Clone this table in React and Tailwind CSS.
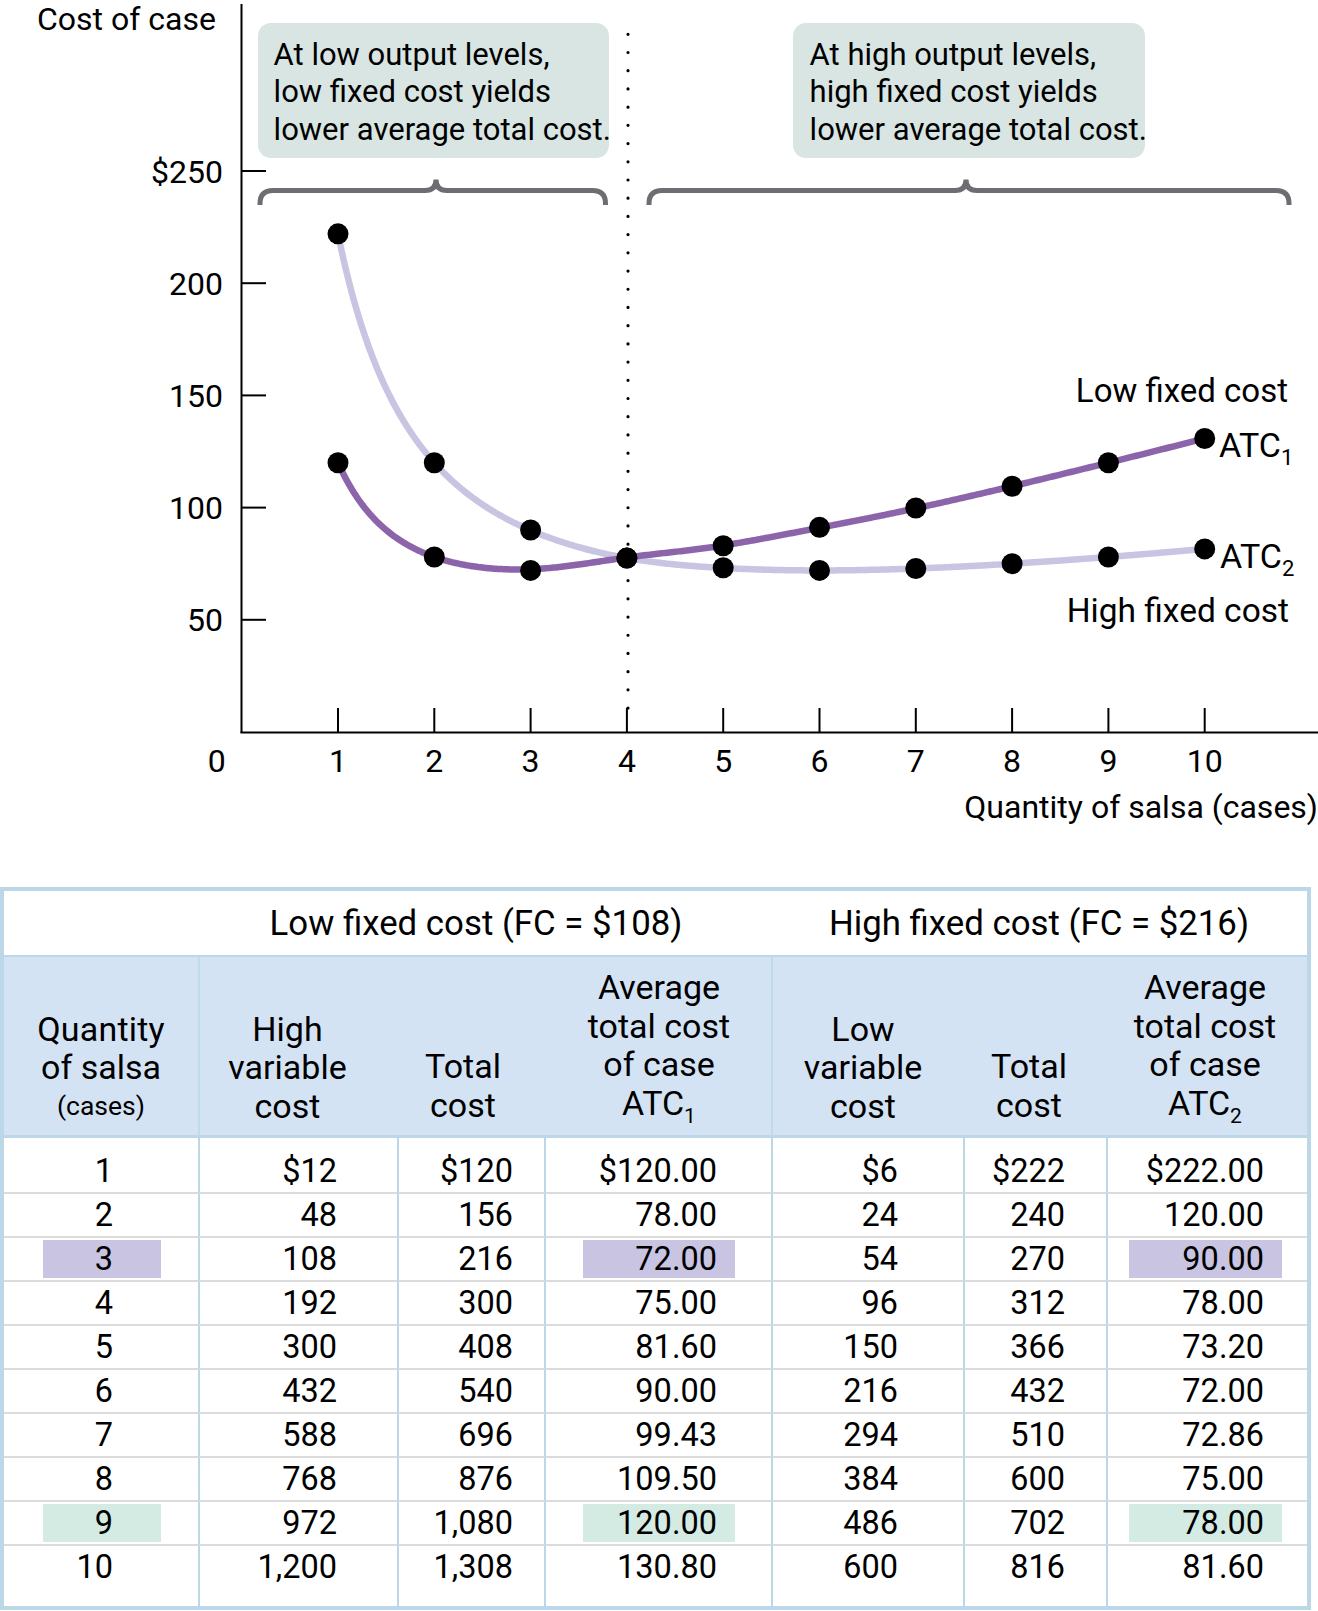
import React from "react";

const X = (q) => 241.7 + 96.3 * q;
const Y = (v) => 732 - 2.244 * v;
const g = (q) => Math.exp(-(((q - 4) / 0.8) ** 2));
const h = (q) => Math.exp(-(((q - 5.5) / 1.2) ** 2));
const atc1 = (q) => 108 / q + 12 * q + 2.5 * g(q) + 1.2 * h(q);
const atc2 = (q) => 216 / q + 6 * q - 0.5 * g(q);

function curvePath(f) {
  let d = "";
  for (let i = 0; i <= 450; i++) {
    const q = 1 + (9 * i) / 450;
    d += (i === 0 ? "M" : "L") + X(q).toFixed(2) + " " + Y(f(q)).toFixed(2) + " ";
  }
  return d;
}

const d1 = [120, 78, 72, 77.5, 83, 91.2, 99.8, 109.5, 120, 130.8];
const d2 = [222, 120, 90, 77.5, 73.2, 72, 72.86, 75, 78, 81.6];

function brace(x1, x2, xm) {
  const y = 190.5;
  const r = 13;
  const yb = 205;
  return `M ${x1} ${yb} L ${x1} ${y + r} Q ${x1} ${y} ${x1 + r} ${y} L ${xm - 11} ${y} Q ${xm} ${y} ${xm} ${y - 11} Q ${xm} ${y} ${xm + 11} ${y} L ${x2 - r} ${y} Q ${x2} ${y} ${x2} ${y + r} L ${x2} ${yb}`;
}

function Chart() {
  const yTicks = [250, 200, 150, 100, 50];
  const qs = [1, 2, 3, 4, 5, 6, 7, 8, 9, 10];
  return (
    <div className="relative h-[887px] w-[1318px]">
      <svg width="1318" height="887" className="block">
        {/* axes */}
        <line x1="241.5" y1="4" x2="241.5" y2="733" stroke="#000" strokeWidth="2" />
        <line x1="240.5" y1="732.5" x2="1318" y2="732.5" stroke="#000" strokeWidth="2" />
        {yTicks.map((v) => (
          <line key={v} x1="241" y1={Y(v)} x2="266" y2={Y(v)} stroke="#000" strokeWidth="2" />
        ))}
        {qs.map((q) => (
          <line key={q} x1={X(q)} y1="708" x2={X(q)} y2="732" stroke="#000" strokeWidth="2" />
        ))}
        {/* dotted line */}
        <line
          x1="628"
          y1="34.3"
          x2="628"
          y2="716"
          stroke="#000"
          strokeWidth="3.2"
          strokeLinecap="round"
          strokeDasharray="0.01 18.2"
        />
        {/* braces */}
        <path d={brace(260, 605.5, 436)} fill="none" stroke="#6d6e71" strokeWidth="5" />
        <path d={brace(649, 1289, 966)} fill="none" stroke="#6d6e71" strokeWidth="5" />
        {/* curves */}
        <path d={curvePath(atc2)} fill="none" stroke="#c8c5e2" strokeWidth="6.5" strokeLinecap="round" />
        <path d={curvePath(atc1)} fill="none" stroke="#8b64aa" strokeWidth="6.5" strokeLinecap="round" />
        {d1.map((v, i) => (
          <circle key={"a" + i} cx={X(i + 1)} cy={Y(v)} r="10.5" fill="#000" />
        ))}
        {d2.map((v, i) => (
          <circle key={"b" + i} cx={X(i + 1)} cy={Y(v)} r="10.5" fill="#000" />
        ))}
        {/* text */}
        <g fill="#000" fontSize="32">
          <text x="37" y="30">Cost of case</text>
          {yTicks.map((v) => (
            <text key={v} x="223" y={Y(v) + 11.5} textAnchor="end">
              {v === 250 ? "$250" : String(v)}
            </text>
          ))}
          <text x="216.7" y="771.7" textAnchor="middle">0</text>
          {qs.map((q) => (
            <text key={q} x={X(q)} y="771.7" textAnchor="middle">
              {q}
            </text>
          ))}
          <text x="1318" y="818" textAnchor="end">Quantity of salsa (cases)</text>
          <text x="1288" y="401.7" textAnchor="end" fontSize="33">Low fixed cost</text>
          <text x="1219" y="457" fontSize="34">
            ATC<tspan fontSize="22" dy="8">1</tspan>
          </text>
          <text x="1220" y="568" fontSize="34">
            ATC<tspan fontSize="22" dy="8">2</tspan>
          </text>
          <text x="1289" y="621.7" textAnchor="end" fontSize="33.5">High fixed cost</text>
        </g>
      </svg>
      <div className="absolute left-[258px] top-[23px] h-[135px] w-[351px] rounded-[13px] bg-[#d8e5e2] pl-[15.6px] pt-[12.5px] text-[31px] leading-[37.5px] text-black whitespace-nowrap">
        <div>At low output levels,</div>
        <div>low fixed cost yields</div>
        <div>lower average total cost.</div>
      </div>
      <div className="absolute left-[793px] top-[23px] h-[135px] w-[352px] rounded-[13px] bg-[#d8e5e2] pl-[16.6px] pt-[12.5px] text-[31px] leading-[37.5px] text-black whitespace-nowrap">
        <div>At high output levels,</div>
        <div>high fixed cost yields</div>
        <div>lower average total cost.</div>
      </div>
    </div>
  );
}

const rows = [
  ["1", "$12", "$120", "$120.00", "$6", "$222", "$222.00"],
  ["2", "48", "156", "78.00", "24", "240", "120.00"],
  ["3", "108", "216", "72.00", "54", "270", "90.00"],
  ["4", "192", "300", "75.00", "96", "312", "78.00"],
  ["5", "300", "408", "81.60", "150", "366", "73.20"],
  ["6", "432", "540", "90.00", "216", "432", "72.00"],
  ["7", "588", "696", "99.43", "294", "510", "72.86"],
  ["8", "768", "876", "109.50", "384", "600", "75.00"],
  ["9", "972", "1,080", "120.00", "486", "702", "78.00"],
  ["10", "1,200", "1,308", "130.80", "600", "816", "81.60"],
];

function Table() {
  const grid = "grid grid-cols-[194px_199px_147px_227px_192px_143px_201px]";
  return (
    <div className="w-[1311px] border-4 border-[#bcd7e8] text-black">
      {/* header row 1 */}
      <div className="flex h-[66px] items-center border-b-2 border-[#bcd7e8] bg-white text-[34.8px] leading-none">
        <div className="w-[194px]" />
        <div className="w-[573px] pr-[17px] text-center whitespace-nowrap">Low fixed cost (FC = $108)</div>
        <div className="w-[536px] text-center whitespace-nowrap">High fixed cost (FC = $216)</div>
      </div>
      {/* header row 2 */}
      <div className={`${grid} h-[181px] border-b-[3px] border-[#bcd7e8] bg-[#d4e3f4] text-[34px] leading-[38.4px]`}>
        <div className="flex flex-col items-center justify-end pb-[10px] text-center">
          <div className="tracking-[0.2px]">Quantity</div>
          <div>of salsa</div>
          <div className="text-[26.5px]">(cases)</div>
        </div>
        <div className="flex flex-col items-center justify-end border-l-2 border-[#c2dbec] pb-[10px] pr-[22px] text-center">
          <div>High</div>
          <div>variable</div>
          <div>cost</div>
        </div>
        <div className="flex flex-col items-center justify-end pb-[11px] pr-[15px] text-center">
          <div>Total</div>
          <div>cost</div>
        </div>
        <div className="flex flex-col items-center justify-end pb-[13px] pl-[3px] text-center">
          <div>Average</div>
          <div>total cost</div>
          <div>of case</div>
          <div>
            ATC<sub className="-bottom-[0.4em] text-[21px]">1</sub>
          </div>
        </div>
        <div className="flex flex-col items-center justify-end border-l-2 border-[#c2dbec] pb-[10px] pr-[10px] text-center">
          <div>Low</div>
          <div>variable</div>
          <div>cost</div>
        </div>
        <div className="flex flex-col items-center justify-end pb-[11px] pr-[11px] text-center">
          <div>Total</div>
          <div>cost</div>
        </div>
        <div className="flex flex-col items-center justify-end pb-[13px] pr-[3px] text-center">
          <div>Average</div>
          <div>total cost</div>
          <div>of case</div>
          <div>
            ATC<sub className="-bottom-[0.4em] text-[21px]">2</sub>
          </div>
        </div>
      </div>
      {/* body */}
      <div className={`${grid} bg-white text-[32.5px] leading-none tabular-nums`}>
        {rows.map((r, i) => {
          const first = i === 0;
          const last = i === 9;
          const hl = i === 2 ? "bg-[#c8c4e2]" : i === 8 ? "bg-[#d3ebe3]" : "";
          const rc = `${first ? "pt-[12px]" : ""} ${last ? "pb-[18px]" : "border-b-2 border-b-[#dcdcdc]"}`;
          const bl = "border-l-2 border-l-[#bcd7e8]";
          return (
            <React.Fragment key={i}>
              <div className={rc}>
                <div className="flex h-[42px] items-center">
                  <div className={`ml-[39px] flex h-[38px] w-[118px] items-center justify-end pr-[48px] ${hl}`}>{r[0]}</div>
                </div>
              </div>
              <div className={`${rc} ${bl}`}>
                <div className="flex h-[42px] items-center justify-end pr-[60px]">{r[1]}</div>
              </div>
              <div className={`${rc} ${bl}`}>
                <div className="flex h-[42px] items-center justify-end pr-[31px]">{r[2]}</div>
              </div>
              <div className={`${rc} ${bl}`}>
                <div className="flex h-[42px] items-center">
                  <div className={`ml-[37px] flex h-[38px] w-[152px] items-center justify-end pr-[18px] ${hl}`}>{r[3]}</div>
                </div>
              </div>
              <div className={`${rc} ${bl}`}>
                <div className="flex h-[42px] items-center justify-end pr-[65px]">{r[4]}</div>
              </div>
              <div className={`${rc} ${bl}`}>
                <div className="flex h-[42px] items-center justify-end pr-[41px]">{r[5]}</div>
              </div>
              <div className={`${rc} ${bl}`}>
                <div className="flex h-[42px] items-center">
                  <div className={`ml-[21px] flex h-[38px] w-[153px] items-center justify-end pr-[18px] ${hl}`}>{r[6]}</div>
                </div>
              </div>
            </React.Fragment>
          );
        })}
      </div>
    </div>
  );
}

export default function App() {
  return (
    <div className="w-[1318px] bg-white font-['Roboto',sans-serif] text-black">
      <Chart />
      <Table />
    </div>
  );
}
